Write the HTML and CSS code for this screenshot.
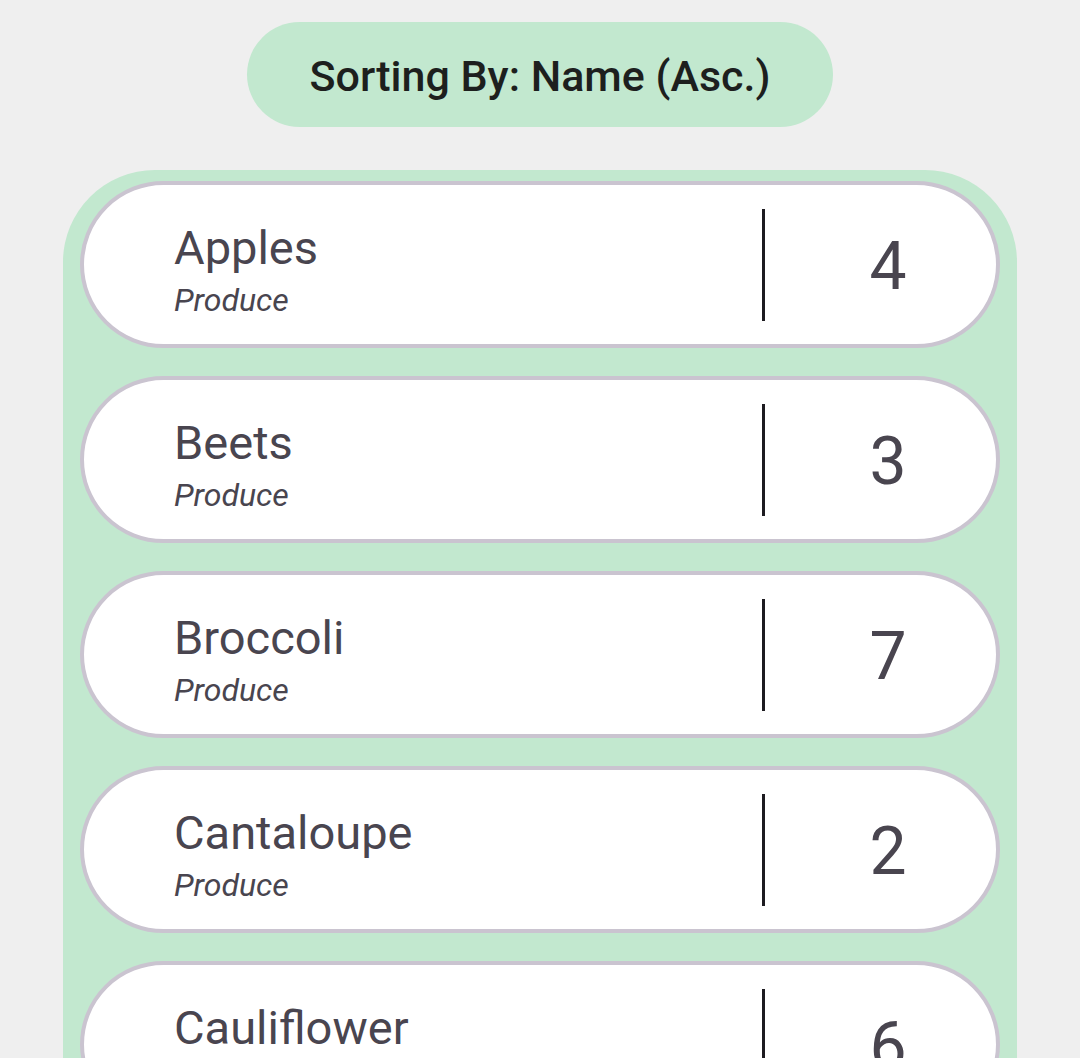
FILE: index.html
```html
<!DOCTYPE html>
<html lang="en">
<head>
<meta charset="utf-8">
<title>Grocery list</title>
<link rel="stylesheet" href="styles.css">
</head>
<body>
<div class="page">
  <div class="sort-pill">Sorting By: Name (Asc.)</div>
  <div class="list">
    <div class="card">
      <div class="info"><div class="name">Apples</div><div class="category">Produce</div></div>
      <div class="divider"></div>
      <div class="qty">4</div>
    </div>
    <div class="card">
      <div class="info"><div class="name">Beets</div><div class="category">Produce</div></div>
      <div class="divider"></div>
      <div class="qty">3</div>
    </div>
    <div class="card">
      <div class="info"><div class="name">Broccoli</div><div class="category">Produce</div></div>
      <div class="divider"></div>
      <div class="qty">7</div>
    </div>
    <div class="card">
      <div class="info"><div class="name">Cantaloupe</div><div class="category">Produce</div></div>
      <div class="divider"></div>
      <div class="qty">2</div>
    </div>
    <div class="card">
      <div class="info"><div class="name">Cauliflower</div><div class="category">Produce</div></div>
      <div class="divider"></div>
      <div class="qty">6</div>
    </div>
  </div>
</div>
</body>
</html>
```

FILE: styles.css
```css
html, body {
  margin: 0;
  padding: 0;
  overflow: hidden;
  background: #efefef;
  font-family: Roboto, "Noto Sans", sans-serif;
}
.page {
  padding-top: 22px;
  display: flex;
  flex-direction: column;
  align-items: center;
}
.sort-pill {
  width: 586px;
  height: 105px;
  border-radius: 53px;
  background: #c2e8cf;
  color: #1d1f1e;
  font-size: 43px;
  font-weight: 500;
  padding-top: 2px;
  display: flex;
  align-items: center;
  justify-content: center;
  box-sizing: border-box;
}
.list {
  margin-top: 43px;
  width: 954px;
  box-sizing: border-box;
  padding: 11px 17px 40px;
  background: #c2e8cf;
  border-radius: 92px 92px 0 0;
  display: flex;
  flex-direction: column;
  gap: 28px;
}
.card {
  height: 167px;
  box-sizing: border-box;
  border: 4px solid #cac4d0;
  border-radius: 84px;
  background: #ffffff;
  display: flex;
  align-items: center;
  color: #49454f;
}
.info {
  flex: 1;
  padding-left: 90px;
  padding-top: 9px;
}
.name {
  font-size: 47px;
  line-height: 54px;
}
.category {
  font-size: 32px;
  line-height: 36px;
  font-style: italic;
  margin-top: 7px;
}
.divider {
  width: 3px;
  height: 112px;
  background: #1d1b20;
}
.qty {
  width: 231px;
  box-sizing: border-box;
  padding-left: 15px;
  padding-top: 4px;
  text-align: center;
  font-size: 66px;
  line-height: 66px;
}
```
